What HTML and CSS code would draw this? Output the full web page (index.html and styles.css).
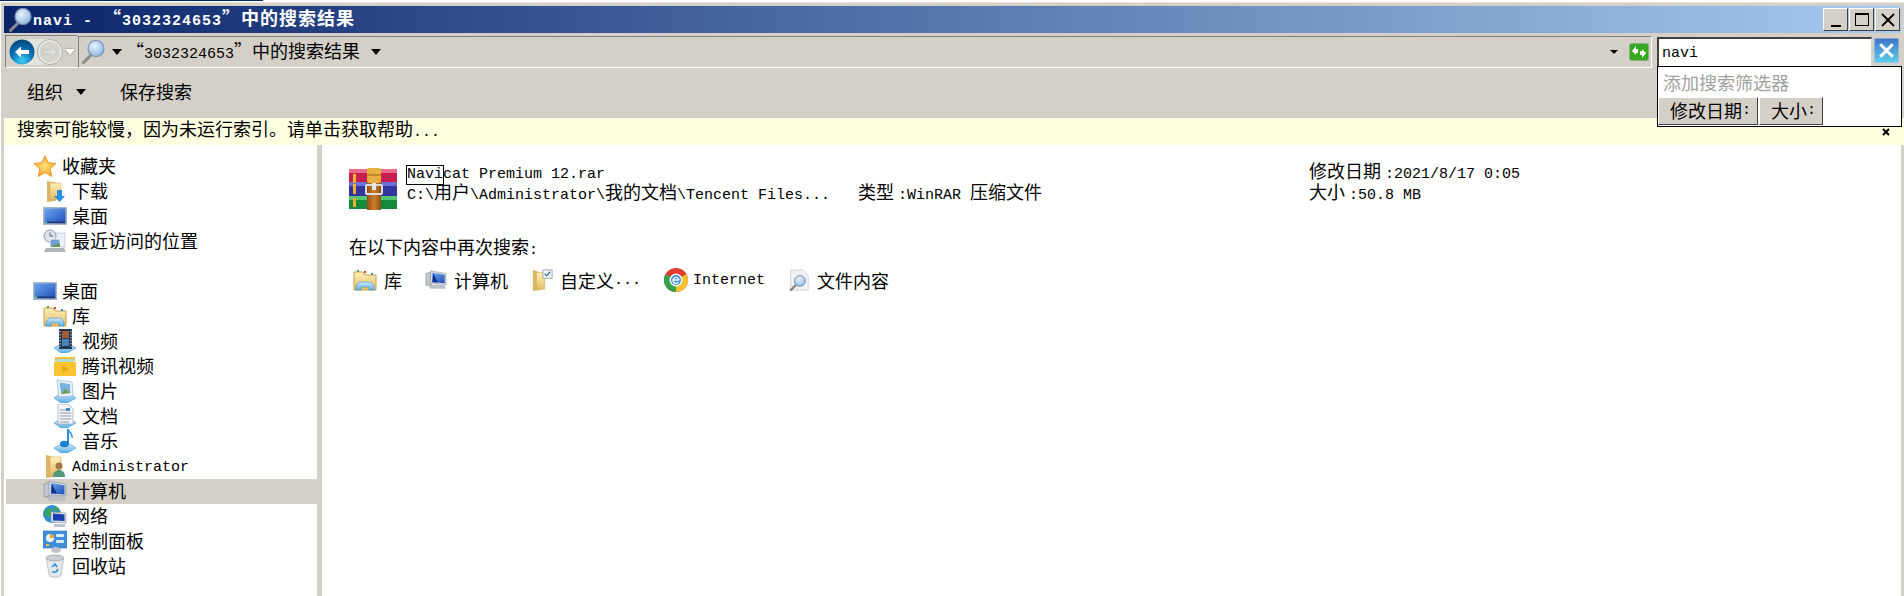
FILE: index.html
```html
<!DOCTYPE html>
<html lang="zh-CN">
<head>
    <meta charset="UTF-8">
    <title>navi - “3032324653”中的搜索结果</title>
    <link rel="stylesheet" href="styles.css">
</head>
<body>
    <svg class="defs" xmlns="http://www.w3.org/2000/svg">
        <defs>
            <linearGradient id="gFolder" x1="0" y1="0" x2="0" y2="1"><stop offset="0" stop-color="#fdf0b8"/><stop offset="1" stop-color="#e6bd62"/></linearGradient>
            <linearGradient id="gScreen" x1="0" y1="0" x2="1" y2="1"><stop offset="0" stop-color="#6aa3ee"/><stop offset="1" stop-color="#1f4fb8"/></linearGradient>
            <linearGradient id="gTray" x1="0" y1="0" x2="0" y2="1"><stop offset="0" stop-color="#cfe8fb"/><stop offset="1" stop-color="#5aaee6"/></linearGradient>
            <linearGradient id="gStrap" x1="0" y1="0" x2="1" y2="0"><stop offset="0" stop-color="#8f4d16"/><stop offset=".5" stop-color="#cf7f2c"/><stop offset="1" stop-color="#8f4d16"/></linearGradient>
            <radialGradient id="gLens" cx=".4" cy=".35" r=".7"><stop offset="0" stop-color="#e6f2fc"/><stop offset="1" stop-color="#8db4e0"/></radialGradient>
            <radialGradient id="gStar" cx=".5" cy=".5" r=".6"><stop offset="0" stop-color="#ffe27a"/><stop offset="1" stop-color="#f59a23"/></radialGradient>
            <radialGradient id="gBack" cx=".5" cy=".85" r=".8"><stop offset="0" stop-color="#3fd0f5"/><stop offset=".55" stop-color="#0a74b8"/><stop offset="1" stop-color="#054a80"/></radialGradient>
            <linearGradient id="gClose" x1="0" y1="0" x2="0" y2="1"><stop offset="0" stop-color="#3f73c8"/><stop offset="1" stop-color="#5fd0ee"/></linearGradient>

            <symbol id="i-mag" viewBox="0 0 24 24">
                <path d="M10 15 2.500 22.500" stroke="#8a8a8a" stroke-width="3" stroke-linecap="round"/>
                <circle cx="15" cy="8.500" r="8" fill="url(#gLens)" stroke="#7d93ad" stroke-width="1.200"/>
            </symbol>
            <symbol id="i-star" viewBox="0 0 24 24">
                <path d="M12 1.500 15.200 8.600 23 9.500 17.200 14.800 18.800 22.500 12 18.600 5.200 22.500 6.800 14.800 1 9.500 8.800 8.600Z" fill="url(#gStar)" stroke="#e38a1f" stroke-width=".8"/>
            </symbol>
            <symbol id="i-dl" viewBox="0 0 24 24">
                <path d="M4 2 13 3.500V22L4 23Z" fill="#d9b766"/>
                <path d="M7 4h11v16H7Z" fill="url(#gFolder)" stroke="#d3ab58" stroke-width=".6"/>
                <path d="M14 11h5v6h3l-5.500 6-5.500-6h3Z" fill="#2a8fdc"/>
            </symbol>
            <symbol id="i-desk" viewBox="0 0 24 24">
                <rect x="0" y="3" width="24" height="18" fill="#a9b6c8"/>
                <rect x="1.500" y="4.500" width="21" height="15" fill="url(#gScreen)"/>
                <rect x="2" y="17.500" width="20" height="1.500" fill="#233a6b"/>
                <rect x="2" y="17.500" width="2" height="1.500" fill="#5fd0a0"/>
            </symbol>
            <symbol id="i-recent" viewBox="0 0 24 24">
                <rect x="8" y="4" width="14" height="14" fill="#e8eef5" stroke="#a8b4c2" stroke-width=".6"/>
                <circle cx="7" cy="7" r="6" fill="#dfe3e8" stroke="#8d97a3"/>
                <path d="M7 3.500V7H10" stroke="#55606c" fill="none"/>
                <rect x="7" y="10" width="10" height="8" fill="#6f9fd0" stroke="#fff"/>
                <path d="M7 18 17 14V18Z" fill="#5f9a54"/>
                <path d="M3 19 21 19 23 23H1Z" fill="#aeb4bb"/>
            </symbol>
            <symbol id="i-lib" viewBox="0 0 24 24">
                <path d="M1 4h9l2 3h11v15H1Z" fill="url(#gFolder)" stroke="#c9a24e"/>
                <rect x="4" y="2" width="2" height="2" fill="#3aa655"/>
                <rect x="11" y="3" width="2" height="2" fill="#d8413a"/>
                <rect x="18" y="5" width="2" height="2" fill="#2a8fdc"/>
                <path d="M6 14h12l3 4v4h-5v-3H8v3H3v-4Z" fill="url(#gTray)" stroke="#3f8ccc" stroke-width=".6"/>
            </symbol>
            <symbol id="i-video" viewBox="0 0 24 24">
                <path d="M1 19 8 15H17L23 19 14 24H8Z" fill="url(#gTray)" stroke="#3f97dc" stroke-width=".6"/>
                <rect x="6" y="0" width="13" height="20" fill="#20384f"/>
                <rect x="9" y="2" width="7" height="7" fill="#a65a32"/>
                <rect x="9" y="10" width="7" height="7" fill="#4f82b4"/>
                <path d="M7 2v16M18 2v16" stroke="#d8e4ee" stroke-dasharray="1.500 1.500"/>
            </symbol>
            <symbol id="i-tencent" viewBox="0 0 24 24">
                <path d="M2 3h20v4H2Z" fill="#f0c040"/>
                <path d="M3 5h18v3H3Z" fill="#b7dbc9"/>
                <path d="M1 8h22v14H1Z" fill="#f8c430"/>
                <path d="M9 11 16 15 9 19Z" fill="#e8a818"/>
            </symbol>
            <symbol id="i-pic" viewBox="0 0 24 24">
                <path d="M1 19 8 14H17L23 19 14 24H8Z" fill="url(#gTray)" stroke="#3f97dc" stroke-width=".6"/>
                <path d="M4 1 19 3 20 17 6 18Z" fill="#f3f6f9" stroke="#8ab4d8" stroke-width=".7"/>
                <path d="M6.500 3.500 17 5 17.500 14 8 15Z" fill="#7ab4dc"/>
                <path d="M8 15 12 10 17.500 14Z" fill="#6f9a50"/>
            </symbol>
            <symbol id="i-doc" viewBox="0 0 24 24">
                <path d="M1 19 8 15H17L23 19 14 24H8Z" fill="url(#gTray)" stroke="#3f97dc" stroke-width=".6"/>
                <path d="M5 0H15L20 5V20H5Z" fill="#f2f4f7" stroke="#97a3b0" stroke-width=".7"/>
                <path d="M7 6h6M7 9h11M7 12h11M7 15h11M7 18h9" stroke="#8c97a5"/>
                <rect x="13" y="4" width="4" height="3" fill="#3f8ccc"/>
            </symbol>
            <symbol id="i-music" viewBox="0 0 24 24">
                <path d="M1 19 8 15H17L23 19 14 24H8Z" fill="url(#gTray)" stroke="#3f97dc" stroke-width=".6"/>
                <path d="M15 0V14" stroke="#2a8fdc" stroke-width="2"/>
                <path d="M15 0C16 4 20 4 19 9" stroke="#2a8fdc" fill="none" stroke-width="1.500"/>
                <ellipse cx="11.500" cy="15" rx="4.500" ry="3.200" fill="#1f7fd0"/>
            </symbol>
            <symbol id="i-admin" viewBox="0 0 24 24">
                <path d="M3 1 11 3V23L3 24Z" fill="#d9b766"/>
                <path d="M7 3h11v18H7Z" fill="url(#gFolder)" stroke="#d3ab58" stroke-width=".6"/>
                <circle cx="16" cy="12" r="3.500" fill="#a8763f"/>
                <path d="M10 23c0-5 3-7 6-7s6 2 6 7Z" fill="#4f9a7a"/>
            </symbol>
            <symbol id="i-comp" viewBox="0 0 24 24">
                <path d="M1 5 7 3V17L1 18Z" fill="#c2c7cd" stroke="#878d94" stroke-width=".6"/>
                <path d="M6 2 23 5V17L6 16Z" fill="#cfd6dd" stroke="#8a929b" stroke-width=".6"/>
                <path d="M8 4 21.500 6.500V15.500L8 14.500Z" fill="url(#gScreen)"/>
                <path d="M9 5 14 14.500H8Z" fill="#0f2f90"/>
                <path d="M4 18 21 18 22 21H6Z" fill="#c2c7cd" stroke="#8a929b" stroke-width=".5"/>
            </symbol>
            <symbol id="i-net" viewBox="0 0 24 24">
                <circle cx="9" cy="10" r="9" fill="#2f8fd0"/>
                <path d="M3 5C7 3 11 6 9 10S4 13 2 11ZM11 2C15 3 17 6 16 8L12 6Z" fill="#3aa655"/>
                <path d="M8 8 23 9V19L8 18Z" fill="#d8dde2" stroke="#8a929b" stroke-width=".6"/>
                <path d="M10 9.500 21.500 10.500V17L10 16.500Z" fill="#1a3fb0"/>
                <path d="M11 20H22V23H11Z" fill="#bfc4ca"/>
            </symbol>
            <symbol id="i-panel" viewBox="0 0 24 24">
                <rect x="0" y="2" width="24" height="17" fill="#3f8fd8" stroke="#2a6fb4" stroke-width=".6"/>
                <circle cx="7" cy="9" r="4" fill="#f2f4f6"/>
                <path d="M7 9V5a4 4 0 0 1 4 4Z" fill="#f0a030"/>
                <rect x="13" y="5" width="8" height="3" rx="1" fill="#d8ecfb"/>
                <rect x="13" y="11" width="8" height="3" rx="1" fill="#d8ecfb"/>
                <rect x="3" y="15" width="3" height="2" fill="#f0c040"/>
                <ellipse cx="13" cy="21" rx="5" ry="3" fill="#bfc4ca"/>
            </symbol>
            <symbol id="i-bin" viewBox="0 0 24 24">
                <ellipse cx="12" cy="4" rx="9" ry="3" fill="#c8ced4" stroke="#8a929b" stroke-width=".6"/>
                <path d="M3.500 5 6 21C7 24 17 24 18 21L20.500 5C17 7.500 7 7.500 3.500 5Z" fill="#e4e8ec" stroke="#a0a7ae" stroke-width=".6"/>
                <path d="M9 13 12 10 14 13M15 15 13 18H9" stroke="#2a8fdc" stroke-width="1.500" fill="none"/>
            </symbol>
            <symbol id="i-rar" viewBox="0 0 48 42" preserveAspectRatio="none">
                <rect x="0" y="1" width="48" height="13" fill="#c81e4e"/>
                <rect x="0" y="1" width="48" height="4" fill="#e86a8c"/>
                <rect x="0" y="14" width="48" height="14" fill="#34349e"/>
                <rect x="0" y="14" width="48" height="4" fill="#6f6fd8"/>
                <rect x="0" y="28" width="48" height="13" fill="#138a3a"/>
                <rect x="0" y="28" width="48" height="4" fill="#50c46e"/>
                <rect x="4" y="6" width="3" height="9" fill="#f0b030"/>
                <rect x="4" y="16" width="3" height="10" fill="#f0b030"/>
                <rect x="4" y="30" width="3" height="9" fill="#f0b030"/>
                <rect x="18" y="14" width="14" height="28" fill="url(#gStrap)"/>
                <rect x="18" y="0" width="14" height="15" rx="2" fill="#e8b040"/>
                <path d="M18 7h14" stroke="#b8802a" stroke-width="1.500"/>
                <rect x="17" y="17" width="16" height="9" rx="1" fill="none" stroke="#dcdcdc" stroke-width="2"/>
                <rect x="23" y="15" width="4" height="7" fill="#e4e4e4"/>
            </symbol>
            <symbol id="i-custom" viewBox="0 0 24 24">
                <path d="M2 1 11 4V23L2 24Z" fill="#d9b766"/>
                <path d="M6 4h9v18H6Z" fill="url(#gFolder)" stroke="#d3ab58" stroke-width=".6"/>
                <rect x="13" y="1" width="10" height="9" fill="#f4f6f8" stroke="#77818c" stroke-width=".7"/>
                <path d="M15 5 17 7.500 21 3" stroke="#2a6fb4" stroke-width="1.300" fill="none"/>
            </symbol>
            <symbol id="i-chrome" viewBox="0 0 24 24">
                <circle cx="12" cy="12" r="12" fill="#e33b2e"/>
                <path d="M12 12 1.600 6A12 12 0 0 0 12 24Z" fill="#35a24a"/>
                <path d="M12 12V24A12 12 0 0 0 22.400 6Z" fill="#fbc02d"/>
                <circle cx="12" cy="12" r="6.500" fill="#fff"/>
                <circle cx="12" cy="12" r="5" fill="#3a8ddc"/>
                <path d="M9 12H15M14.500 14A3 3 0 1 1 15 12" stroke="#fff" stroke-width="1.300" fill="none"/>
            </symbol>
            <symbol id="i-file" viewBox="0 0 24 24">
                <path d="M3 1H16L22 7V23H3Z" fill="#f1f2f3" stroke="#c4c7ca" stroke-width=".8"/>
                <path d="M9 17 3 23" stroke="#8a8a8a" stroke-width="2.500" stroke-linecap="round"/>
                <circle cx="13" cy="13" r="6" fill="url(#gLens)" stroke="#7d93ad"/>
            </symbol>
        </defs>
    </svg>

    <div class="topstrip"></div>
    <div class="window">
        <div class="titlebar">
            <svg class="title-icon"><use href="#i-mag"/></svg>
            <span class="title-text"><span class="lat">navi - </span>“<span class="lat">3032324653</span>”中的搜索结果</span>
            <div class="winbtns">
                <div class="winbtn"><span class="glyph-min"></span></div>
                <div class="winbtn"><span class="glyph-max"></span></div>
                <div class="winbtn">
                    <svg class="glyph-close" viewBox="0 0 14 14"><path d="M1 1 13 13M13 1 1 13" stroke="#000" stroke-width="1.800"/></svg>
                </div>
            </div>
        </div>

        <div class="addressbar">
            <div class="nav-buttons">
                <div class="nav-pill">
                    <svg class="circle-btn" viewBox="0 0 26 26">
                        <circle cx="13" cy="13" r="12.500" fill="url(#gBack)"/>
                        <path d="M6 13 12 7.500V11H20V15H12V18.500Z" fill="#fff"/>
                    </svg>
                    <svg class="circle-btn" viewBox="0 0 26 26">
                        <circle cx="13" cy="13" r="12.500" fill="#ecebe8" stroke="#a9a9a7"/>
                        <circle cx="13" cy="13" r="10.500" fill="#d4d3cf"/>
                        <path d="M20 13 14 7.500V11H6V15H14V18.500Z" fill="#dddcd9" stroke="#bdbdbb" stroke-width=".7"/>
                    </svg>
                </div>
                <span class="mini-down"></span>
            </div>
            <div class="crumb">
                <svg class="crumb-icon"><use href="#i-mag"/></svg>
                <span class="arrow"></span>
                <span class="crumb-text">“<span class="lat">3032324653</span>”中的搜索结果</span>
                <span class="arrow"></span>
                <span class="crumb-fill"></span>
                <span class="arrow-small"></span>
                <svg class="refresh" viewBox="0 0 20 18">
                    <rect x=".5" y=".5" width="19" height="17" rx="2" fill="#35a81f" stroke="#8ab080"/>
                    <path d="M3 8 7 3V6H9V10H7V12ZM17 10 13 15V12H11V8H13V6Z" fill="#fff"/>
                </svg>
            </div>
            <div class="searchbox"><span class="lat">navi</span></div>
            <div class="search-clear">
                <svg viewBox="0 0 24 24"><rect width="24" height="24" fill="url(#gClose)" stroke="#c8ccd0"/><path d="M6 6 18 18M18 6 6 18" stroke="#fff" stroke-width="3"/></svg>
            </div>
        </div>

        <div class="toolbar">
            <span class="tool">组织</span>
            <span class="arrow tool-arrow"></span>
            <span class="tool tool-save">保存搜索</span>
        </div>

        <div class="infobar">
            <span>搜索可能较慢，因为未运行索引。请单击获取帮助<span class="lat">...</span></span>
            <svg class="info-x" viewBox="0 0 8 8"><path d="M1 1 7 7M7 1 1 7" stroke="#000" stroke-width="2"/></svg>
        </div>

        <div class="filters">
            <div class="filters-hint">添加搜索筛选器</div>
            <div class="filters-row">
                <span class="filter-btn">修改日期<span class="lat">:</span></span>
                <span class="filter-btn">大小<span class="lat">:</span></span>
            </div>
        </div>

        <div class="main">
            <div class="navpane">
                <div class="row l1"><svg class="ico"><use href="#i-star"/></svg>收藏夹</div>
                <div class="row l2"><svg class="ico"><use href="#i-dl"/></svg>下载</div>
                <div class="row l2"><svg class="ico"><use href="#i-desk"/></svg>桌面</div>
                <div class="row l2"><svg class="ico"><use href="#i-recent"/></svg>最近访问的位置</div>
                <div class="row"></div>
                <div class="row l1"><svg class="ico"><use href="#i-desk"/></svg>桌面</div>
                <div class="row l2"><svg class="ico"><use href="#i-lib"/></svg>库</div>
                <div class="row l3"><svg class="ico"><use href="#i-video"/></svg>视频</div>
                <div class="row l3"><svg class="ico"><use href="#i-tencent"/></svg>腾讯视频</div>
                <div class="row l3"><svg class="ico"><use href="#i-pic"/></svg>图片</div>
                <div class="row l3"><svg class="ico"><use href="#i-doc"/></svg>文档</div>
                <div class="row l3"><svg class="ico"><use href="#i-music"/></svg>音乐</div>
                <div class="row l2"><svg class="ico"><use href="#i-admin"/></svg><span class="lat">Administrator</span></div>
                <div class="row l2 selected"><svg class="ico"><use href="#i-comp"/></svg>计算机</div>
                <div class="row l2"><svg class="ico"><use href="#i-net"/></svg>网络</div>
                <div class="row l2"><svg class="ico"><use href="#i-panel"/></svg>控制面板</div>
                <div class="row l2"><svg class="ico"><use href="#i-bin"/></svg>回收站</div>
            </div>
            <div class="splitter"></div>
            <div class="results">
                <div class="result">
                    <svg class="rar"><use href="#i-rar"/></svg>
                    <div class="cell"><span class="lat"><span class="hit">Navi</span>cat Premium 12.rar</span></div>
                    <div class="cell"></div>
                    <div class="cell">修改日期<span class="lat val">:2021/8/17 0:05</span></div>
                    <div class="cell"><span class="lat">C:\</span>用户<span class="lat">\Administrator\</span>我的文档<span class="lat">\Tencent Files...</span></div>
                    <div class="cell">类型<span class="lat val">:WinRAR </span>压缩文件</div>
                    <div class="cell">大小<span class="lat val">:50.8 MB</span></div>
                </div>
                <div class="again-title">在以下内容中再次搜索<span class="lat">:</span></div>
                <div class="again">
                    <div class="again-item"><svg class="ico"><use href="#i-lib"/></svg>库</div>
                    <div class="again-item"><svg class="ico small"><use href="#i-comp"/></svg>计算机</div>
                    <div class="again-item"><svg class="ico small"><use href="#i-custom"/></svg>自定义<span class="lat">...</span></div>
                    <div class="again-item"><svg class="ico tight"><use href="#i-chrome"/></svg><span class="lat">Internet</span></div>
                    <div class="again-item"><svg class="ico small"><use href="#i-file"/></svg>文件内容</div>
                </div>
            </div>
        </div>
    </div>
</body>
</html>
```

FILE: styles.css
```css
* {
    box-sizing: border-box;
}

html, body {
    margin: 0;
    height: 596px;
    overflow: hidden;
    background: #fff;
}

body {
    font-family: "Noto Sans CJK SC", "Liberation Mono", monospace;
    font-size: 18px;
    line-height: 21px;
    color: #000;
}

.lat {
    font-family: "Liberation Mono", monospace;
    font-size: 15px;
    white-space: pre;
}

.defs {
    display: block;
    width: 0;
    height: 0;
}

.topstrip {
    width: 263px;
    height: 1px;
    background: #0a246a;
}

.window {
    position: relative;
    display: flex;
    flex-direction: column;
    height: 594px;
    margin: 1px 0 0 1px;
    padding: 3px 3px 0;
    border-top: 1px solid #e8e6e1;
    background: #d4d0c8;
}

/* title bar */
.titlebar {
    display: flex;
    align-items: center;
    height: 27px;
    flex: none;
    padding-left: 4px;
    background: linear-gradient(to right, #0a246a, #a6caf0);
    color: #fff;
}

.title-icon {
    width: 24px;
    height: 24px;
    margin-right: 1px;
}

.title-text {
    font-weight: 700;
    letter-spacing: 1px;
}

.title-text .lat {
    font-weight: 700;
}

.winbtns {
    display: flex;
    gap: 1px;
    margin-left: auto;
    padding-right: 1px;
}

.winbtn {
    display: flex;
    align-items: center;
    justify-content: center;
    width: 25px;
    height: 23px;
    background: #d4d0c8;
    border: 1px solid;
    border-color: #fff #404040 #404040 #fff;
}

.glyph-min {
    width: 10px;
    height: 2px;
    margin-top: 12px;
    background: #000;
}

.glyph-max {
    width: 14px;
    height: 13px;
    border: 1px solid #000;
    border-top-width: 2px;
}

.glyph-close {
    width: 14px;
    height: 14px;
}

/* address bar */
.addressbar {
    display: flex;
    align-items: stretch;
    height: 36px;
    flex: none;
    padding: 2px 2px 1px 1px;
}

.nav-buttons {
    display: flex;
    align-items: center;
    gap: 2px;
    width: 73px;
    padding-left: 3px;
    border: 1px solid;
    border-color: #808080 transparent #fff #808080;
}

.nav-pill {
    display: flex;
    gap: 2px;
    border-radius: 13px;
    background: #e4e2dd;
}

.circle-btn {
    width: 26px;
    height: 26px;
}

.mini-down {
    width: 0;
    height: 0;
    border: 5px solid transparent;
    border-top: 6px solid #fff;
    border-bottom: 0;
    filter: drop-shadow(0 0 1px #777);
}

.crumb {
    display: flex;
    align-items: center;
    width: 1574px;
    margin-top: 1px;
    padding-right: 2px;
    border: 1px solid;
    border-color: #808080 #fff #fff #808080;
}

.crumb-icon {
    width: 24px;
    height: 24px;
    margin: 0 7px 0 2px;
}

.arrow {
    width: 0;
    height: 0;
    border: 5.5px solid transparent;
    border-top: 6px solid #000;
    border-bottom: 0;
}

.crumb-text {
    margin: 0 11px 0 4px;
}

.crumb-fill {
    flex: 1;
}

.arrow-small {
    width: 0;
    height: 0;
    border: 4px solid transparent;
    border-top: 4px solid #000;
    border-bottom: 0;
    margin-right: 11px;
}

.refresh {
    width: 20px;
    height: 18px;
}

.searchbox {
    display: flex;
    align-items: center;
    width: 215px;
    margin: 2px 0 0 5px;
    padding-left: 3px;
    background: #fff;
    border-style: solid;
    border-width: 2px 1px 1px 2px;
    border-color: #404040 #d4d0c8 #d4d0c8 #404040;
}

.search-clear {
    width: 25px;
    height: 25px;
    margin: 3px 0 0 2px;
}

.search-clear svg {
    display: block;
    width: 25px;
    height: 25px;
}

/* toolbar */
.toolbar {
    display: flex;
    align-items: center;
    height: 49px;
    flex: none;
    padding: 0 0 4px 23px;
}

.tool-arrow {
    margin-left: 13px;
}

.tool-save {
    margin-left: 34px;
}

/* yellow info bar */
.infobar {
    position: relative;
    display: flex;
    align-items: center;
    height: 27px;
    flex: none;
    margin-right: -3px;
    padding: 0 0 2px 13px;
    background: #ffffe1;
}

.info-x {
    position: absolute;
    top: 10px;
    left: 1878px;
    width: 8px;
    height: 8px;
}

/* search filter dropdown */
.filters {
    position: absolute;
    top: 63px;
    left: 1656px;
    width: 245px;
    height: 61px;
    background: #fff;
    border: 1px solid #000;
}

.filters-hint {
    height: 30px;
    padding-left: 5px;
    line-height: 30px;
    color: #a0a0a0;
}

.filters-row {
    display: flex;
    gap: 1px;
}

.filter-btn {
    display: flex;
    align-items: center;
    height: 28px;
    padding: 0 6px 2px 11px;
    background: #d4d0c8;
    border: 1px solid;
    border-color: #fff #404040 #404040 #fff;
}

/* main area */
.main {
    display: flex;
    flex: 1;
    min-height: 0;
    background: #fff;
}

.navpane {
    width: 313px;
    flex: none;
    padding: 9px 0 0 2px;
    background: #fff;
}

.row {
    display: flex;
    align-items: center;
    height: 25px;
    padding-bottom: 2px;
}

.row.l1 { padding-left: 27px; }
.row.l2 { padding-left: 37px; }
.row.l3 { padding-left: 47px; }

.row > .lat {
    margin-top: 3px;
}

.row.selected {
    background: #d4d0c8;
}

.ico {
    width: 24px;
    height: 24px;
    flex: none;
    margin-right: 5px;
}

.splitter {
    width: 5px;
    flex: none;
    background: #d4d0c8;
}

.results {
    flex: 1;
    padding: 15px 0 0 27px;
}

.result {
    position: relative;
    display: grid;
    grid-template-columns: 451px 451px 1fr;
    grid-template-rows: 21px 21px;
    padding-left: 58px;
}

.rar {
    position: absolute;
    top: 8px;
    left: 0;
    width: 48px;
    height: 42px;
}

.cell {
    white-space: nowrap;
}

.val {
    margin-left: 4px;
}

.hit {
    padding: 0 0 1px;
    margin: 0 -1px;
    border: 1px solid #000;
}

.again-title {
    margin-top: 34px;
}

.again {
    display: flex;
    gap: 23px;
    align-items: center;
    margin-top: 7px;
    padding-left: 4px;
}

.again-item {
    display: flex;
    align-items: center;
}

.again-item .ico {
    margin-right: 7px;
}

.again-item .ico.small {
    width: 22px;
    height: 22px;
}

.again-item .ico.tight {
    margin-right: 5px;
}
```
